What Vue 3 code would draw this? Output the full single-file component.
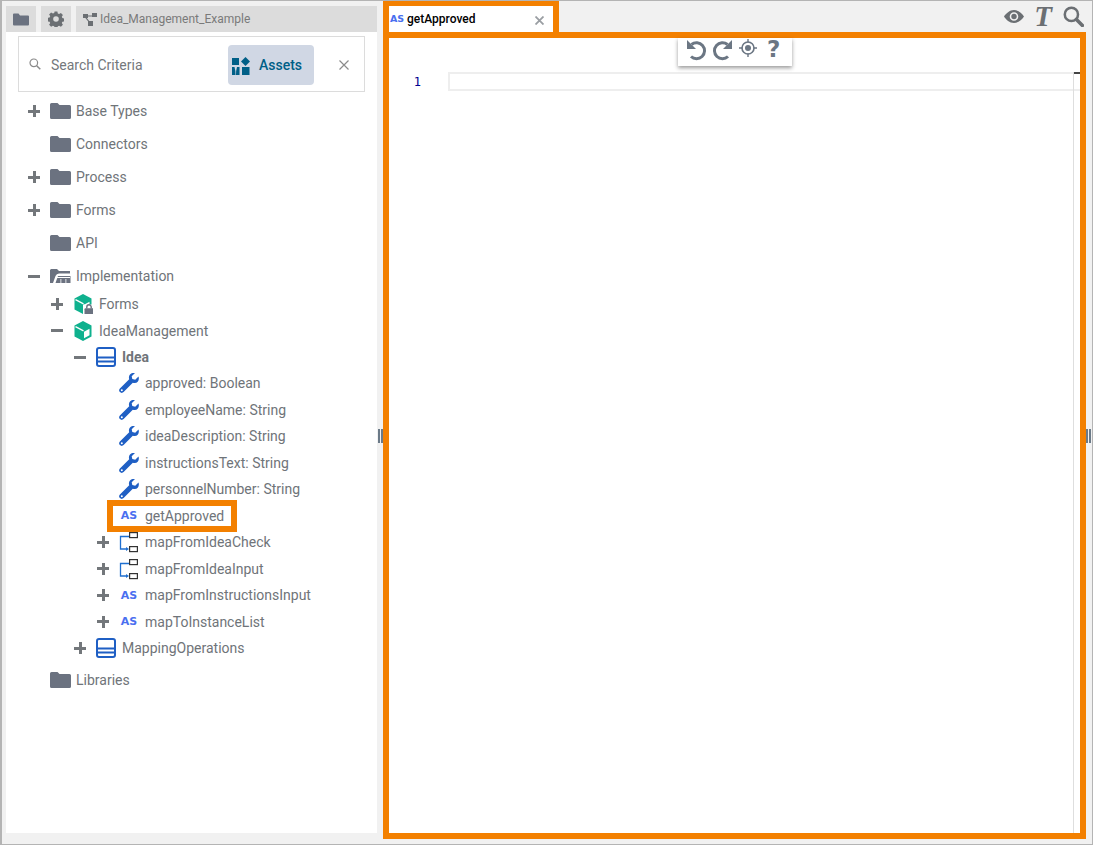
<script setup>
const rows = [
  { d: 0, exp: '+', label: 'Forms', iconType: 'cubeLock' },
  { d: 0, exp: '-', label: 'IdeaManagement', iconType: 'cube' },
  { d: 1, exp: '-', label: 'Idea', iconType: 'cls', bold: true },
  { d: 2, label: 'approved: Boolean', iconType: 'wrench' },
  { d: 2, label: 'employeeName: String', iconType: 'wrench' },
  { d: 2, label: 'ideaDescription: String', iconType: 'wrench' },
  { d: 2, label: 'instructionsText: String', iconType: 'wrench' },
  { d: 2, label: 'personnelNumber: String', iconType: 'wrench' },
  { d: 2, label: 'getApproved', iconType: 'as', mark: true },
  { d: 2, exp: '+', label: 'mapFromIdeaCheck', iconType: 'map' },
  { d: 2, exp: '+', label: 'mapFromIdeaInput', iconType: 'map' },
  { d: 2, exp: '+', label: 'mapFromInstructionsInput', iconType: 'as' },
  { d: 2, exp: '+', label: 'mapToInstanceList', iconType: 'as' },
  { d: 1, exp: '+', label: 'MappingOperations', iconType: 'cls' }
]
const tops1 = [
  { exp: '+', label: 'Base Types' },
  { label: 'Connectors' },
  { exp: '+', label: 'Process' },
  { exp: '+', label: 'Forms' },
  { label: 'API' }
]
</script>

<template>
  <div class="app">
    <aside class="left">
      <div class="head">
        <button class="hbtn">
          <svg width="16" height="13" viewBox="0 0 16 13"><path class="fold" d="M0 1.500Q0 .5 1 .5h4.500l1.500 2h8q1 0 1 1v8q0 1-1 1H1q-1 0-1-1z"/></svg>
        </button>
        <button class="hbtn">
          <svg width="16" height="16" viewBox="0 0 16 16"><path fill="#6b6f73" d="M6.600.5h2.800l.4 2 1.300.6 1.800-1.100 2 2-1.100 1.800.6 1.300 2 .4v2.800l-2 .4-.6 1.300 1.100 1.800-2 2-1.800-1.100-1.300.6-.4 2H6.600l-.4-2-1.300-.6-1.800 1.100-2-2 1.100-1.800-.6-1.300-2-.4V6.900l2-.4.600-1.300L1.100 3.400l2-2 1.800 1.100 1.300-.6z"/><circle cx="8" cy="8" r="2.800" fill="#dcdcdc"/></svg>
        </button>
        <div class="title">
          <svg width="14" height="13" viewBox="0 0 14 13"><g fill="#6b6f73"><rect x="0" y="1" width="5" height="4"/><rect x="9" y="0" width="5" height="4"/><rect x="5" y="8" width="5" height="5"/><path d="M4 2.500h6v1H4zM3 4l4 5-1 .6-4-5z"/></g></svg>
          <span>Idea_Management_Example</span>
        </div>
      </div>
      <div class="tree-pane">
        <div class="search">
          <svg class="glass" width="12" height="12" viewBox="0 0 12 12"><circle cx="4.800" cy="4.800" r="3.800" fill="none" stroke="#8a8a8a" stroke-width="1.200"/><path d="M7.700 7.700l3.600 3.600" stroke="#8a8a8a" stroke-width="1.500"/></svg>
          <span class="crit">Search Criteria</span>
          <div class="assets">
            <svg width="18" height="18" viewBox="0 0 18 18"><g fill="#005f87"><rect x="0" y="1" width="7" height="7"/><rect x="10" y="10" width="7.500" height="8"/><path d="M13.500 0L18 4.500 13.500 9 9 4.500z"/><path d="M0 10h2.500q1 3 1 8H0zM7.500 10H5q-1 3-1 8h3.500z"/></g></svg>
            <span>Assets</span>
          </div>
          <svg class="clear" width="10" height="10" viewBox="0 0 10 10"><path d="M.5.500l9 9M9.500.500l-9 9" stroke="#8b8b8b" stroke-width="1.200"/></svg>
        </div>

        <div v-for="r in tops1" :key="r.label" class="row top">
          <span class="exp"><i v-if="r.exp" class="h"></i><i v-if="r.exp" class="v"></i></span>
          <svg class="ic" width="21" height="16" viewBox="0 0 21 16"><path class="fold" d="M0 1.500Q0 0 1.500 0h6l2 2h10Q21 2 21 3.500v11q0 1.500-1.500 1.500h-18Q0 16 0 14.500z"/></svg>
          <span class="lab">{{ r.label }}</span>
        </div>
        <div class="row top">
          <span class="exp"><i class="h"></i></span>
          <svg class="ic" width="21" height="14" viewBox="0 0 21 14"><path fill="#6b7280" d="M1 0h6l2 2h11v2.500H9Q6.500 4.500 5.500 7L3 14H0V1z"/><path fill="#6b7280" d="M8 7h12.500v7H5.500z"/><path fill="#fff" d="M10.500 10h.8v4h-.8zM15.500 10h.8v4h-.8zM6 8h14v1H6z"/></svg>
          <span class="lab">Implementation</span>
        </div>

        <div class="nested">
          <div v-for="r in rows" :key="r.label" class="row sub" :class="'d' + r.d">
            <span class="exp"><i v-if="r.exp" class="h"></i><i v-if="r.exp === '+'" class="v"></i></span>
            <svg v-if="r.iconType === 'cube' || r.iconType === 'cubeLock'" class="ic" width="20" height="20" viewBox="0 0 20 20">
              <path fill="#0fb18e" d="M10 0l8.500 4.500v11L10 20l-8.500-4.500v-11z"/>
              <path fill="#fff" d="M11 10.700l5.500-3v6.600L11 17.300z"/>
              <path fill="none" stroke="#fff" stroke-width="1.300" d="M2.500 5.600l8 4.300"/>
              <g v-if="r.iconType === 'cubeLock'"><path d="M10 10.500h10.500v10H10z" fill="#fff"/><rect x="11.500" y="14.200" width="9" height="6.500" rx="1" fill="#6b7280"/><path d="M13.800 14.500V13a2.200 2.200 0 0 1 4.400 0v1.500" fill="none" stroke="#6b7280" stroke-width="1.400"/></g>
            </svg>
            <svg v-else-if="r.iconType === 'cls'" class="ic" width="20" height="20" viewBox="0 0 20 20">
              <rect x="1" y="1" width="18" height="18" rx="2" fill="none" stroke="#1f5fc4" stroke-width="2"/>
              <path d="M1 10.500h18M1 14.500h18" stroke="#1f5fc4" stroke-width="1.800"/>
            </svg>
            <svg v-else-if="r.iconType === 'wrench'" class="ic" width="20" height="20" viewBox="0 0 20 20">
              <path fill="#1f5fc4" d="M19.500 3.500l-3.300 3.200-2.900-.6-.6-2.900L16 0c-2.900-.7-6 1.200-6.100 4.300 0 .8.100 1.300.3 1.900L.9 15.400c-1.200 1.200-1 2.800 0 3.700 1 1 2.600 1.100 3.700 0l9.200-9.300c.6.200 1.200.3 1.900.3 3.200-.1 5-3.400 3.800-6.600z"/>
              <circle cx="2.800" cy="17.200" r="1" fill="#fff"/>
            </svg>
            <span v-else-if="r.iconType === 'as'" class="as ic">AS</span>
            <svg v-else class="ic map" width="20" height="22" viewBox="0 0 20 22">
              <path d="M10 5.500H1.500V18H8" fill="none" stroke="#1f6fd0" stroke-width="1.300"/><path d="M7 16l3 2-3 2z" fill="#1f6fd0"/>
              <rect x="10.600" y="1.600" width="7.800" height="5" fill="#fff" stroke="#333" stroke-width="1.200"/>
              <rect x="10.600" y="15.600" width="7.800" height="5" fill="#fff" stroke="#333" stroke-width="1.200"/>
            </svg>
            <span class="lab" :class="{ bold: r.bold, marked: r.mark }">{{ r.label }}</span>
          </div>
        </div>

        <div class="row top">
          <span class="exp"></span>
          <svg class="ic" width="21" height="16" viewBox="0 0 21 16"><path class="fold" d="M0 1.500Q0 0 1.500 0h6l2 2h10Q21 2 21 3.500v11q0 1.500-1.500 1.500h-18Q0 16 0 14.500z"/></svg>
          <span class="lab">Libraries</span>
        </div>
      </div>
    </aside>

    <div class="split"><i></i><i></i></div>

    <main class="right">
      <div class="tabbar">
        <div class="tab">
          <span class="as tabas">AS</span>
          <span class="tabname">getApproved</span>
          <svg class="tabx" width="9" height="9" viewBox="0 0 9 9"><path d="M.5.500l8 8M8.500.500l-8 8" stroke="#9a9ea3" stroke-width="1.800"/></svg>
        </div>
        <div class="tools">
          <svg width="20" height="13" viewBox="0 0 20 13"><path fill="#6b6f73" fill-rule="evenodd" d="M10 0c4.500 0 8 3.500 10 6.500-2 3-5.500 6.500-10 6.500S2 9.500 0 6.500C2 3.500 5.500 0 10 0zm0 2.200a4.300 4.300 0 1 0 0 8.600 4.300 4.300 0 0 0 0-8.600z"/><circle cx="10" cy="6.500" r="2.700" fill="#6b6f73"/></svg>
          <span class="tee">T</span>
          <svg width="21" height="21" viewBox="0 0 20 20"><circle cx="8" cy="8" r="6.300" fill="none" stroke="#6b6f73" stroke-width="2.400"/><path d="M12.800 12.800l5.700 5.700" stroke="#6b6f73" stroke-width="3.400" stroke-linecap="round"/></svg>
        </div>
      </div>
      <div class="editor">
        <div class="line">
          <span class="num">1</span>
          <div class="active"></div>
        </div>
        <i class="margin"></i>
        <i class="tick"></i>
        <div class="float">
          <svg width="22" height="22" viewBox="0 0 22 22"><path d="M5.500 5.500A8 8 0 1 1 5 17.500" fill="none" stroke="#6b7683" stroke-width="3"/><path d="M1 1v9h9z" fill="#6b7683"/></svg>
          <svg width="22" height="22" viewBox="0 0 22 22"><path d="M16.500 5.500A8 8 0 1 0 17 17.500" fill="none" stroke="#6b7683" stroke-width="3"/><path d="M21 1v9h-9z" fill="#6b7683"/></svg>
          <svg class="target" width="18" height="18" viewBox="0 0 18 18"><circle cx="9" cy="9" r="6" fill="none" stroke="#6b7683" stroke-width="1.600"/><circle cx="9" cy="9" r="3" fill="#6b7683"/><path d="M9 0v3.500M9 14.500V18M0 9h3.500M14.500 9H18" stroke="#6b7683" stroke-width="1.400"/></svg>
          <span class="q">?</span>
        </div>
      </div>
    </main>

    <div class="split end"><i></i><i></i></div>
  </div>
</template>

<style scoped>
.app {
  width: 1093px;
  height: 845px;
  box-sizing: border-box;
  border: 1px solid #b4b4b4;
  border-left-width: 2px;
  border-right-width: 1px;
  background: #f1f1f1;
  display: flex;
  font-family: Roboto, "Liberation Sans", sans-serif;
  color: #6f7479;
  overflow: hidden;
}
.left {
  width: 375px;
  flex: none;
  box-sizing: border-box;
  padding: 5px 0 11px 4px;
  display: flex;
  flex-direction: column;
}
.head { display: flex; gap: 5px; height: 26px; flex: none; }
.hbtn {
  width: 30px;
  border: 0;
  padding: 0;
  background: #dcdcdc;
  display: flex;
  align-items: center;
  justify-content: center;
}
.title {
  flex: 1;
  background: #dcdcdc;
  display: flex;
  align-items: center;
  gap: 3px;
  padding-left: 7px;
  font-size: 12px;
  color: #7a7a7a;
}
.fold { fill: #6b7280; }
.tree-pane { flex: 1; background: #fff; padding-top: 4px; }
.search {
  margin: 0 12px 2.500px 12px;
  height: 56px;
  box-sizing: border-box;
  border: 1px solid #dcdcdc;
  display: flex;
  align-items: center;
  position: relative;
  padding-left: 10px;
}
.crit { margin-left: 10px; font-size: 14px; color: #74787c; width: 177px; padding-top: 2px; }
.assets {
  width: 86px;
  height: 40px;
  margin-top: 2px;
  background: #d0d7e4;
  border-radius: 4px;
  display: flex;
  align-items: center;
  gap: 9px;
  padding-left: 4px;
  box-sizing: border-box;
  color: #005f87;
  font-weight: 500;
  font-size: 14px;
}
.assets svg { margin-top: 2px; }
.clear { margin-left: 25px; margin-top: 2px; }
.row { display: flex; align-items: center; white-space: nowrap; font-size: 14px; }
.top { height: 33px; padding-left: 22px; }
.nested { margin: -1.600px 0 1.900px; }
.sub { height: 26.460px; }
.d0 { padding-left: 45px; }
.d1 { padding-left: 68px; }
.d2 { padding-left: 91px; }
.exp { width: 12px; height: 12px; margin-right: 10px; position: relative; flex: none; }
.exp .h { position: absolute; left: 0; right: 0; top: 4.500px; height: 3px; background: #73777b; }
.exp .v { position: absolute; top: 0; bottom: 0; left: 4.500px; width: 3px; background: #73777b; }
.top .ic { margin-right: 5px; }
.ic { flex: none; }
.sub .ic { width: 20px; margin-right: 6px; }
.map { overflow: visible; }
.lab { line-height: 1; }
.bold { font-weight: 700; }
.marked { position: relative; }
.marked::before {
  content: "";
  position: absolute;
  left: -38px;
  top: -9px;
  width: 130px;
  height: 32px;
  box-sizing: border-box;
  border: 6px solid #f38000;
}
.as {
  font-family: "DejaVu Sans", sans-serif;
  font-weight: 700;
  font-size: 11px;
  color: #4a6ff0;
  text-align: center;
  line-height: 1;
  display: inline-block;
}
.split {
  width: 6px;
  flex: none;
  box-sizing: border-box;
  padding-top: 27px;
  display: flex;
  align-items: center;
  justify-content: center;
  gap: 1px;
}
.split i { width: 2px; height: 14px; background: #6b7a88; }
.split.end { width: 5px; }
.right { width: 703px; flex: none; display: flex; flex-direction: column; }
.tabbar { height: 31px; flex: none; display: flex; justify-content: space-between; }
.tab {
  width: 176px;
  box-sizing: border-box;
  border: 6px solid #f38000;
  border-top-width: 5px;
  border-bottom-width: 0;
  background: #fff;
  display: flex;
  align-items: center;
  font-size: 12px;
  position: relative;
}
.tabas { font-size: 9.500px; width: 15px; margin-left: 1px; margin-right: 2px; text-align: left; }
.tabname { color: #000; font-weight: 500; }
.tabx { position: absolute; right: 9px; top: 10px; }
.tools { display: flex; align-items: center; margin-right: -5px; }
.tools svg:first-child { margin-right: 10px; }
.tee {
  font-family: "Liberation Serif", serif;
  font-style: italic;
  font-weight: 700;
  font-size: 29px;
  color: #6b6f73;
  line-height: 1;
  margin-right: 11px;
}
.tools svg:last-child { margin-right: 7px; }
.editor {
  height: 807px;
  box-sizing: border-box;
  border: 6px solid #f38000;
  background: #fff;
  position: relative;
  padding-top: 34px;
}
.line { display: flex; height: 19px; }
.num {
  width: 60px;
  padding: 1px 28px 0 0;
  box-sizing: border-box;
  text-align: right;
  font-family: "DejaVu Sans Mono", monospace;
  font-size: 12px;
  line-height: 19px;
  color: #000090;
}
.active { flex: 1; box-sizing: border-box; border: 2px solid #eeeeee; border-right-width: 0; margin-left: -1px; }
.margin { position: absolute; left: 684px; top: 34px; bottom: 0; width: 1px; background: #dedede; }
.tick { position: absolute; left: 685px; top: 34px; width: 6px; height: 2px; background: #444; }
.float {
  position: absolute;
  left: 289px;
  top: 0;
  width: 114px;
  height: 28px;
  background: #fff;
  box-shadow: 0 2px 4px rgba(0, 0, 0, 0.4);
  display: flex;
  align-items: center;
  justify-content: flex-start;
  gap: 3px;
  box-sizing: border-box;
  padding: 0 0 5px 8px;
}
.target { margin: -4px 0 0 3px; }
.q { font-family: "DejaVu Sans", sans-serif; font-weight: 700; font-size: 23px; color: #6b7683; line-height: 1; margin-left: 7px; }
</style>
